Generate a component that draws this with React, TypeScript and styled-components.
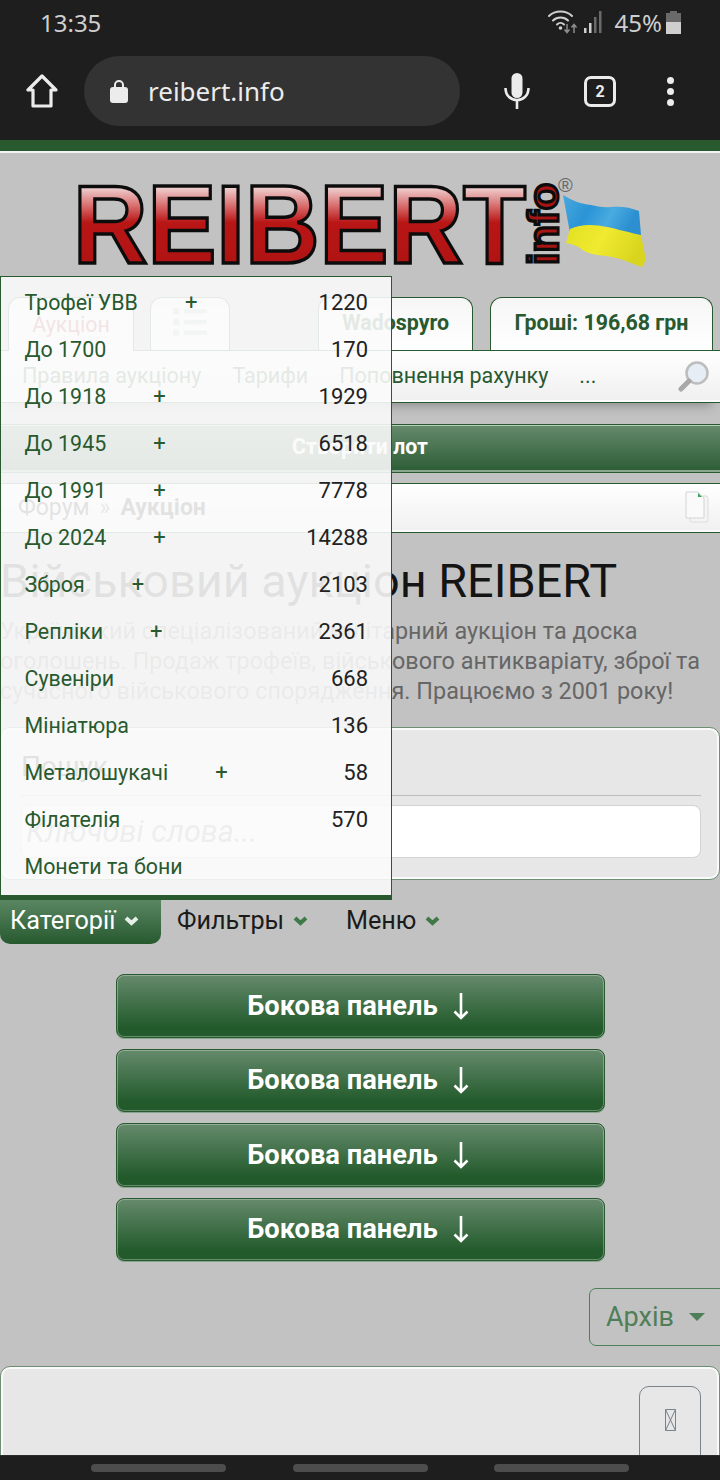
import React from "react";
import styled, { createGlobalStyle } from "styled-components";
import { FaList } from "react-icons/fa";

const GREEN = "#28592f";

const Global = createGlobalStyle`
  html, body { margin: 0; padding: 0; background: #1e1e1e; }
  * { box-sizing: border-box; }
  body { font-family: Roboto, "Noto Sans", sans-serif; }
`;

const Screen = styled.div`
  position: relative;
  width: 720px;
  height: 1480px;
  overflow: hidden;
  display: flex;
  flex-direction: column;
  background: #1e1e1e;
`;

const StatusBar = styled.div`
  height: 44px;
  padding: 0 39px 0 40px;
  display: flex;
  align-items: center;
  justify-content: space-between;
  color: #cfcfcf;
  font-family: "Noto Sans", sans-serif;
  font-size: 24px;
`;

const StatusRight = styled.div`
  display: flex;
  align-items: center;
  gap: 6px;
`;

const Percent = styled.span`
  margin-left: 7px;
  margin-right: -2px;
`;

const Toolbar = styled.div`
  height: 96px;
  padding: 12px 0 14px 26px;
  display: flex;
  align-items: center;
  color: #ececec;
`;

const UrlPill = styled.div`
  width: 376px;
  height: 70px;
  margin-left: 26px;
  padding-left: 26px;
  border-radius: 35px;
  background: #333333;
  display: flex;
  align-items: center;
  gap: 20px;
  font-family: "Noto Sans", sans-serif;
  font-size: 26px;
`;

const ToolIcons = styled.div`
  display: flex;
  align-items: center;
  margin-left: 44px;
`;

const TabCount = styled.div`
  width: 32px;
  height: 31px;
  margin-left: 54px;
  border: 3px solid #ececec;
  border-radius: 7px;
  display: flex;
  align-items: center;
  justify-content: center;
  font-size: 16px;
  font-weight: 700;
`;

const Dots = styled.div`
  margin-left: 51px;
  display: flex;
  flex-direction: column;
  gap: 4px;
  span {
    width: 7px;
    height: 7px;
    border-radius: 50%;
    background: #ececec;
  }
`;

const Page = styled.div`
  flex: 1;
  min-height: 0;
  overflow: hidden;
  border-top: 11px solid ${GREEN};
  background: #c2c2c2;
`;

const TopLine = styled.div`
  height: 2px;
  background: #f4f4f4;
`;

const LogoBox = styled.div`
  height: 144px;
  svg { display: block; }
`;

const TabsRow = styled.div`
  height: 53px;
  padding: 0 7px 0 8px;
  display: flex;
  align-items: stretch;
`;

const Tab = styled.div<{ $width: number; $gap?: number; $active?: boolean }>`
  width: ${(p) => p.$width}px;
  margin-left: ${(p) => p.$gap ?? 0}px;
  padding-bottom: ${(p) => (p.$active ? 0 : 4)}px;
  border: 1px solid ${GREEN};
  border-bottom: 0;
  border-radius: 12px 12px 0 0;
  background: linear-gradient(#f6f6f6, #ffffff);
  display: flex;
  align-items: center;
  justify-content: center;
  font-size: 21.4px;
  color: ${(p) => (p.$active ? "#b03030" : GREEN)};
  font-weight: ${(p) => (p.$active ? 400 : 700)};
  position: relative;
  ${(p) => p.$active && "margin-bottom: -1px; z-index: 1; background: #f8f8f8;"}
`;

const NavBar = styled.div`
  height: 53px;
  position: relative;
  border-top: 1px solid ${GREEN};
  border-bottom: 1px solid ${GREEN};
  background: linear-gradient(#ffffff, #efefef);
  box-shadow: inset 0 -2px 0 #fbfbfb, 0 10px 12px -8px rgba(0, 0, 0, 0.3);
  display: flex;
  align-items: center;
  padding: 0 10px 2px 22px;
  font-size: 21.5px;
  color: ${GREEN};
`;

const NavLink = styled.span<{ $gap?: number }>`
  margin-left: ${(p) => p.$gap ?? 0}px;
  white-space: nowrap;
`;

const SearchIcon = styled.svg`
  margin-left: auto;
`;

const CreateBar = styled.div`
  height: 49px;
  margin-top: 21px;
  padding-bottom: 4px;
  border-top: 1px solid ${GREEN};
  border-bottom: 1px solid ${GREEN};
  background: linear-gradient(#658a6c, #2b5c34);
  box-shadow: inset 0 1px 0 #b9cdbc, inset 0 -2px 0 #8aa88f;
  display: flex;
  align-items: center;
  justify-content: center;
  color: #ffffff;
  font-size: 21.3px;
  font-weight: 700;
`;

const Crumbs = styled.div`
  height: 50px;
  margin-top: 10px;
  padding: 0 11px 2px 18px;
  border-top: 1px solid ${GREEN};
  border-bottom: 1px solid ${GREEN};
  background: linear-gradient(#ffffff, #f0f0f0);
  box-shadow: inset 0 -2px 0 #fbfbfb;
  display: flex;
  align-items: center;
  font-size: 23px;
  color: #1f1f1f;
  b { margin-left: 10px; }
  i { margin-left: 10px; font-style: normal; color: #555; }
  svg { margin-left: auto; }
`;

const Title = styled.h1`
  margin: 24px 0 0;
  font-size: 46.8px;
  line-height: 48px;
  font-weight: 400;
  color: #141414;
  white-space: nowrap;
`;

const Lead = styled.p`
  margin: 11px 0 0;
  font-size: 23.4px;
  line-height: 30px;
  color: #666666;
  white-space: nowrap;
`;

const SearchCard = styled.div`
  height: 153px;
  margin-top: 21px;
  padding: 0 18px 0 20px;
  border: 1px solid #6f8f74;
  border-radius: 10px;
  background: #e7e7e7;
  box-shadow: inset 0 0 0 2px #fafafa;
`;

const SearchTitle = styled.div`
  height: 68px;
  padding-top: 21px;
  font-size: 28px;
  line-height: 36px;
  color: #222;
  border-bottom: 1px solid #bdbdbd;
`;

const SearchInput = styled.div`
  height: 53px;
  margin-top: 9px;
  padding-left: 4px;
  border: 1px solid #d2d2d2;
  border-radius: 8px;
  background: #ffffff;
  display: flex;
  align-items: center;
  font-size: 30.6px;
  font-style: italic;
  color: #888;
`;

const MenuRow = styled.div`
  height: 47px;
  margin-top: 17px;
  display: flex;
  align-items: stretch;
  font-size: 25.2px;
  color: #1b1b1b;
`;

const MenuItem = styled.div<{ $active?: boolean; $width: number }>`
  width: ${(p) => p.$width}px;
  padding: 0 0 0 ${(p) => (p.$active ? 10 : 16)}px;
  display: flex;
  align-items: center;
  gap: 9px;
  ${(p) =>
    p.$active &&
    `color: #fff; border-radius: 0 0 10px 10px; background: linear-gradient(#5d8a66, #27592f);`}
`;

const SideList = styled.div`
  margin: 30px auto 0;
  width: 489px;
  display: flex;
  flex-direction: column;
  gap: 11px;
`;

const SideButton = styled.div`
  height: 63.5px;
  padding-right: 4px;
  border: 1px solid ${GREEN};
  border-radius: 8px;
  background: linear-gradient(#658a6c, #225a2b 85%);
  box-shadow: inset 0 0 0 1px rgba(255, 255, 255, 0.3), 0 1px 0 #86a58c;
  display: flex;
  align-items: center;
  justify-content: center;
  gap: 15px;
  color: #fff;
  font-size: 27.3px;
  font-weight: 700;
  white-space: pre;
`;

const ArchiveRow = styled.div`
  margin-top: 27px;
  display: flex;
  justify-content: flex-end;
`;

const ArchiveButton = styled.div`
  width: 137px;
  height: 58px;
  margin-right: -6px;
  padding-left: 16px;
  border: 1px solid #4f7f58;
  border-radius: 7px;
  display: flex;
  align-items: center;
  gap: 15px;
  color: #4f7f58;
  font-size: 27px;
  &::after {
    content: "";
    border-left: 8px solid transparent;
    border-right: 8px solid transparent;
    border-top: 8px solid #4f7f58;
  }
`;

const BottomPanel = styled.div`
  height: 160px;
  margin-top: 20px;
  padding: 19px 18px 0 0;
  border: 1px solid #6f8f74;
  border-radius: 10px;
  background: #e7e7e7;
  box-shadow: inset 0 0 0 2px #fafafa;
  display: flex;
  justify-content: flex-end;
`;

const GlyphButton = styled.div`
  width: 62px;
  height: 90px;
  padding-top: 22px;
  border: 1px solid #7a828a;
  border-radius: 10px;
  display: flex;
  justify-content: center;
  svg { display: block; }
`;

const SystemNav = styled.div`
  height: 25px;
  padding: 8px 91px 0;
  display: flex;
  justify-content: space-between;
  border-top: 1px solid #2c2c2c;
  span {
    width: 135px;
    height: 8px;
    border-radius: 4px;
    background: #4d4d4d;
  }
`;

const Dropdown = styled.div`
  position: absolute;
  z-index: 5;
  left: 0;
  top: 276px;
  width: 392px;
  height: 624px;
  padding: 2px 23px 0 23.5px;
  border: 1px solid ${GREEN};
  border-bottom-width: 5px;
  background: rgba(250, 250, 250, 0.89);
  font-size: 21.4px;
`;

const DropRow = styled.div`
  height: 47px;
  display: flex;
  align-items: center;
  color: ${GREEN};
`;

const Plus = styled.span`
  margin-left: 47px;
  font-size: 22px;
`;

const Count = styled.span`
  margin-left: auto;
  font-size: 22px;
  color: #222;
`;

const categories: { name: string; count?: number; plus?: boolean }[] = [
  { name: "Трофеї УВВ", count: 1220, plus: true },
  { name: "До 1700", count: 170 },
  { name: "До 1918", count: 1929, plus: true },
  { name: "До 1945", count: 6518, plus: true },
  { name: "До 1991", count: 7778, plus: true },
  { name: "До 2024", count: 14288, plus: true },
  { name: "Зброя", count: 2103, plus: true },
  { name: "Репліки", count: 2361, plus: true },
  { name: "Сувеніри", count: 668 },
  { name: "Мініатюра", count: 136 },
  { name: "Металошукачі", count: 58, plus: true },
  { name: "Філателія", count: 570 },
  { name: "Монети та бони" },
];

function Chevron({ color }: { color: string }) {
  return (
    <svg width="15" height="10" viewBox="0 0 15 10">
      <path d="M2 2l5.500 5 5.500-5" fill="none" stroke={color} strokeWidth="4" />
    </svg>
  );
}

function DownArrow() {
  return (
    <svg width="16" height="28" viewBox="0 0 16 28">
      <path d="M8 1v25M1.500 19.500L8 26l6.500-6.500" fill="none" stroke="#fff" strokeWidth="2.600" />
    </svg>
  );
}

function Logo() {
  return (
    <svg width="720" height="144" viewBox="0 153 720 144">
      <defs>
        <linearGradient id="red" gradientUnits="userSpaceOnUse" x1="0" y1="184" x2="0" y2="264">
          <stop offset="0" stopColor="#f3e4e4" />
          <stop offset="0.28" stopColor="#d86a6a" />
          <stop offset="0.48" stopColor="#b91616" />
          <stop offset="1" stopColor="#b01313" />
        </linearGradient>
        <linearGradient id="blue" x1="0" y1="0" x2="1" y2="0.3">
          <stop offset="0" stopColor="#4aa8dc" />
          <stop offset="0.4" stopColor="#2a94d6" />
          <stop offset="0.7" stopColor="#49abe0" />
          <stop offset="1" stopColor="#2b8fd0" />
        </linearGradient>
        <linearGradient id="yellow" x1="0" y1="0" x2="1" y2="0.3">
          <stop offset="0" stopColor="#e2df20" />
          <stop offset="0.5" stopColor="#f0ea30" />
          <stop offset="1" stopColor="#d9d51e" />
        </linearGradient>
      </defs>
      <text
        x="73"
        y="263"
        fontFamily="Liberation Sans"
        fontWeight="700"
        fontSize="112"
        textLength="453"
        lengthAdjust="spacingAndGlyphs"
        fill="url(#red)"
        stroke="#0c0c0c"
        strokeWidth="3.500"
      >
        REIBERT
      </text>
      <text
        transform="translate(558 265) rotate(-90)"
        fontFamily="Liberation Sans"
        fontWeight="700"
        fontSize="42"
        textLength="82"
        lengthAdjust="spacingAndGlyphs"
        fill="#a81414"
        stroke="#0c0c0c"
        strokeWidth="3"
      >
        info
      </text>
      <text x="558" y="192" fontFamily="Liberation Sans" fontSize="20" fill="#666">
        ®
      </text>
      <path d="M563 195c10 6 18 9 28 10 6 1 12 3 20 2 9-1 19 0 28 4l2 24c-12 1-22-1-32-3-15-3-30-3-39 1z" fill="url(#blue)" />
      <path d="M570 229c10-5 24-5 37-2 10 2 24 6 34 8l5 25-4 7c-10-3-18-8-30-10-12-2-24-2-32-9-3-2-7-4-14-5z" fill="url(#yellow)" />
    </svg>
  );
}

export default function App() {
  return (
    <Screen>
      <Global />
      <StatusBar>
        <span>13:35</span>
        <StatusRight>
          <svg width="30" height="26" viewBox="0 0 30 26">
            <g fill="none" stroke="#cfcfcf" strokeWidth="2" strokeLinecap="round">
              <path d="M1 7c6-6 17-6 23 0" />
              <path d="M5 11.500c4-4 11-4 15 0" />
              <path d="M9 15.500c2-2 5-2 7 0" />
            </g>
            <circle cx="12.500" cy="19" r="1.800" fill="#cfcfcf" />
            <path d="M19 15v8M16.500 20.500l2.500 3 2.500-3M26 24v-8M23.500 18.500l2.500-3 2.500 3" stroke="#8c8c8c" strokeWidth="1.500" fill="none" />
          </svg>
          <svg width="18" height="24" viewBox="0 0 18 24">
            <rect x="0" y="18" width="2.500" height="5" fill="#cfcfcf" />
            <rect x="5" y="13" width="2.500" height="10" fill="#cfcfcf" />
            <rect x="10" y="7" width="2.500" height="16" fill="#6a6a6a" />
            <rect x="15" y="1" width="2.500" height="22" fill="#6a6a6a" />
          </svg>
          <Percent>45%</Percent>
          <svg width="15" height="23" viewBox="0 0 15 23">
            <path d="M4 0h7v2h4v9H0V2h4z" fill="#6a6a6a" />
            <rect y="11" width="15" height="12" fill="#cfcfcf" />
          </svg>
        </StatusRight>
      </StatusBar>
      <Toolbar>
        <svg width="32" height="34" viewBox="0 0 32 34">
          <path d="M16 2L2 16h5v16h18V16h5z" fill="none" stroke="#ececec" strokeWidth="3.200" strokeLinejoin="round" />
        </svg>
        <UrlPill>
          <svg width="18" height="24" viewBox="0 0 18 24">
            <path d="M5 9V6a4 4 0 018 0v3" fill="none" stroke="#ececec" strokeWidth="2" />
            <rect y="8" width="18" height="16" rx="3" fill="#ececec" />
          </svg>
          <span>reibert.info</span>
        </UrlPill>
        <ToolIcons>
          <svg width="26" height="36" viewBox="0 0 26 36">
            <rect x="7.500" y="0" width="11" height="25" rx="5.500" fill="#ececec" />
            <path d="M1.500 15c0 16 23 16 23 0M13 27v9" fill="none" stroke="#ececec" strokeWidth="2.600" />
          </svg>
          <TabCount>2</TabCount>
          <Dots>
            <span />
            <span />
            <span />
          </Dots>
        </ToolIcons>
      </Toolbar>
      <Page>
        <TopLine />
        <LogoBox>
          <Logo />
        </LogoBox>
        <TabsRow>
          <Tab $width={126} $active>
            Аукціон
          </Tab>
          <Tab $width={80} $gap={16}>
            <FaList size={34} color="#b8c8bb" />
          </Tab>
          <Tab $width={155} $gap={88}>
            Wadospyro
          </Tab>
          <Tab $width={223} $gap={17}>
            Гроші: 196,68 грн
          </Tab>
        </TabsRow>
        <NavBar>
          <NavLink>Правила аукціону</NavLink>
          <NavLink $gap={31}>Тарифи</NavLink>
          <NavLink $gap={31}>Поповнення рахунку</NavLink>
          <NavLink $gap={31}>...</NavLink>
          <SearchIcon width="32" height="32" viewBox="0 0 32 32">
            <circle cx="19" cy="13" r="10.500" fill="#e6edf4" stroke="#bdbdbd" strokeWidth="2.500" />
            <path d="M11 21L3 29" stroke="#a8a8a8" strokeWidth="5" strokeLinecap="round" />
          </SearchIcon>
        </NavBar>
        <CreateBar>Створити лот</CreateBar>
        <Crumbs>
          <span>Форум</span>
          <i>»</i>
          <b>Аукціон</b>
          <svg width="24" height="32" viewBox="0 0 24 32">
            <rect x="5" y="5" width="18" height="26" rx="2" fill="#f4f4f4" stroke="#dcdcdc" />
            <path d="M1 1h12l6 6v20H1z" fill="#fafafa" stroke="#d4d4d4" />
            <path d="M13 2l4 4h-4z" fill="#3aa35a" />
          </svg>
        </Crumbs>
        <Title>Військовий аукціон REIBERT</Title>
        <Lead>
          Український спеціалізований мілітарний аукціон та доска
          <br />
          оголошень. Продаж трофеїв, військового антикваріату, зброї та
          <br />
          сучасного військового спорядження. Працюємо з 2001 року!
        </Lead>
        <SearchCard>
          <SearchTitle>Пошук</SearchTitle>
          <SearchInput>Ключові слова...</SearchInput>
        </SearchCard>
        <MenuRow>
          <MenuItem $active $width={161}>
            Категорії <Chevron color="#e8efe9" />
          </MenuItem>
          <MenuItem $width={169}>
            Фильтры <Chevron color="#3e7a48" />
          </MenuItem>
          <MenuItem $width={120}>
            Меню <Chevron color="#3e7a48" />
          </MenuItem>
        </MenuRow>
        <SideList>
          {[0, 1, 2, 3].map((i) => (
            <SideButton key={i}>
              Бокова панель
              <DownArrow />
            </SideButton>
          ))}
        </SideList>
        <ArchiveRow>
          <ArchiveButton>Архів</ArchiveButton>
        </ArchiveRow>
        <BottomPanel>
          <GlyphButton>
            <svg width="11" height="22" viewBox="0 0 11 22">
              <path d="M.5.500h10v21H.5zM.5.500l10 21M10.500.500l-10 21" fill="none" stroke="#7a828a" />
            </svg>
          </GlyphButton>
        </BottomPanel>
      </Page>
      <SystemNav>
        <span />
        <span />
        <span />
      </SystemNav>
      <Dropdown>
        {categories.map((c) => (
          <DropRow key={c.name}>
            {c.name}
            {c.plus && <Plus>+</Plus>}
            {c.count !== undefined && <Count>{c.count}</Count>}
          </DropRow>
        ))}
      </Dropdown>
    </Screen>
  );
}
